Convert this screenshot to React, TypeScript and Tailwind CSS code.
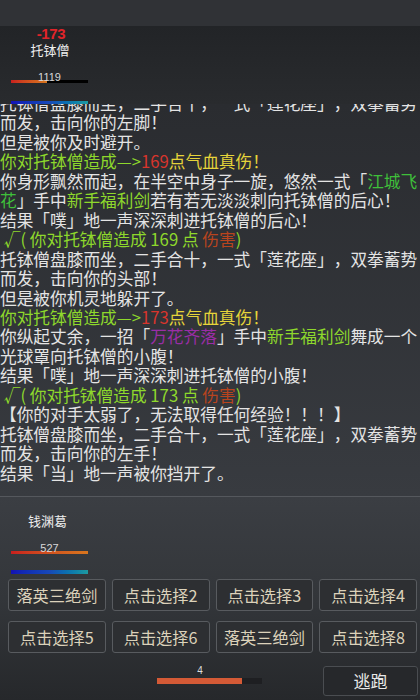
import React from 'react';

type Seg = { t: string; c?: string };

const W = '#e4e4e4';
const LIME = '#8ed82c';
const RED = '#d8352c';
const YEL = '#e6d43a';
const DARKRED = '#b8441e';
const GREEN = '#3fbf3a';
const PURPLE = '#9a2ea6';

const lines: Seg[][] = [
  [{ t: '托钵僧盘膝而坐，二手合十，一式「莲花座」，双拳蓄势' }],
  [{ t: '而发，击向你的左脚！' }],
  [{ t: '但是被你及时避开。' }],
  [{ t: '你对托钵僧造成—>', c: LIME }, { t: '169', c: RED }, { t: '点气血真伤！', c: YEL }],
  [{ t: '你身形飘然而起，在半空中身子一旋，悠然一式「' }, { t: '江城飞', c: GREEN }],
  [{ t: '花', c: GREEN }, { t: '」手中' }, { t: '新手福利剑', c: LIME }, { t: '若有若无淡淡刺向托钵僧的后心！' }],
  [{ t: '结果「噗」地一声深深刺进托钵僧的后心！' }],
  [{ t: ' √( 你对托钵僧造成 169 点 ', c: LIME }, { t: '伤害', c: DARKRED }, { t: ')', c: LIME }],
  [{ t: '托钵僧盘膝而坐，二手合十，一式「莲花座」，双拳蓄势' }],
  [{ t: '而发，击向你的头部！' }],
  [{ t: '但是被你机灵地躲开了。' }],
  [{ t: '你对托钵僧造成—>', c: LIME }, { t: '173', c: RED }, { t: '点气血真伤！', c: YEL }],
  [{ t: '你纵起丈余，一招「' }, { t: '万花齐落', c: PURPLE }, { t: '」手中' }, { t: '新手福利剑', c: LIME }, { t: '舞成一个' }],
  [{ t: '光球罩向托钵僧的小腹！' }],
  [{ t: '结果「噗」地一声深深刺进托钵僧的小腹！' }],
  [{ t: ' √( 你对托钵僧造成 173 点 ', c: LIME }, { t: '伤害', c: DARKRED }, { t: ')', c: LIME }],
  [{ t: '【你的对手太弱了，无法取得任何经验！！！】' }],
  [{ t: '托钵僧盘膝而坐，二手合十，一式「莲花座」，双拳蓄势' }],
  [{ t: '而发，击向你的左手！' }],
  [{ t: '结果「当」地一声被你挡开了。' }],
];

const skills = ['落英三绝剑', '点击选择2', '点击选择3', '点击选择4', '点击选择5', '点击选择6', '落英三绝剑', '点击选择8'];

function Bars({ hp, pct }: { hp: string; pct: number }) {
  return (
    <div className="w-[77px] ml-[11px]">
      <div className="text-[11px] leading-[11px] text-[#d8d8d8] text-center font-['Liberation_Sans',sans-serif]">{hp}</div>
      <div className="h-[3px] bg-black mt-[-3px]">
        <div className="h-full bg-gradient-to-r from-[#c81e1e] to-[#d8761e]" style={{ width: `${pct}%` }} />
      </div>
    </div>
  );
}

function Mp() {
  return <div className="w-[77px] ml-[11px] h-[4px] bg-gradient-to-r from-[#1410b4] via-[#1848b8] to-[#1e9aa0]" />;
}

export default function App() {
  return (
    <div className="w-[420px] h-[700px] overflow-hidden flex flex-col bg-[#2c2e32] font-['Noto_Sans_CJK_SC',sans-serif] [text-spacing-trim:space-all]">
      <div className="h-[26px] bg-[#303236] shrink-0" />
      <div className="h-[78px] shrink-0 bg-gradient-to-b from-[#222427] to-[#292b2e] flex flex-col">
        <div className="w-[100px] text-center pt-[1px]">
          <div className="text-[#e0242a] text-[15px] leading-[14px] font-bold font-['Liberation_Sans',sans-serif] tracking-tight ml-[2px]">-173</div>
          <div className="text-[#eeeeee] text-[13px] leading-[15px] mt-[1px]">托钵僧</div>
        </div>
        <div className="mt-[15px]">
          <Bars hp="1119" pct={47} />
        </div>
        <div className="mt-[18px]">
          <Mp />
        </div>
      </div>
      <div className="h-[393px] shrink-0 overflow-hidden bg-gradient-to-b from-[#2a2c30] to-[#383b40] border-b border-[#55585d]">
        <div className="mt-[-10px] text-[16.7px] leading-[19.45px] text-[#e4e4e4]">
          {lines.map((l, i) => (
            <div key={i} className="whitespace-pre">
              {l.map((s, j) => (
                <span key={j} style={{ color: s.c ?? W }}>{s.t}</span>
              ))}
            </div>
          ))}
        </div>
      </div>
      <div className="flex-1 flex flex-col bg-gradient-to-b from-[#3b3e43] via-[#33363a] to-[#26282b]">
        <div className="ml-[28px] mt-[17px] text-[13px] leading-[14px] text-[#eeeeee]">钱渊葛</div>
        <div className="mt-[15px]">
          <Bars hp="527" pct={100} />
        </div>
        <div className="mt-[16px]">
          <Mp />
        </div>
        <div className="grid grid-cols-4 gap-x-[6px] gap-y-[10px] px-[8px] mt-[5px] pr-[3px]">
          {skills.map((s, i) => (
            <div key={i} className="h-[32px] rounded-[3px] border border-[#585b5f] bg-[#2d2f32] flex items-center justify-center text-[16.2px] text-[#dcd2ba]">
              {s}
            </div>
          ))}
        </div>
        <div className="flex items-start mt-[13px]">
          <div className="w-[157px]" />
          <div className="w-[105px] flex flex-col">
            <div className="text-[10px] leading-[10px] text-[#dddddd] text-center w-[86px] font-['Liberation_Sans',sans-serif]">4</div>
            <div className="h-[6px] mt-[2px] bg-[#1e1f22] w-[105px]">
              <div className="h-full w-[85px] bg-[#d45a36]" />
            </div>
          </div>
          <div className="flex-1" />
          <div className="w-[95px] h-[30px] mr-[2px] rounded-[3px] border border-[#4a4d51] bg-[#26282b] flex items-center justify-center text-[17px] text-[#e8e8e8]">
            逃跑
          </div>
        </div>
      </div>
    </div>
  );
}
